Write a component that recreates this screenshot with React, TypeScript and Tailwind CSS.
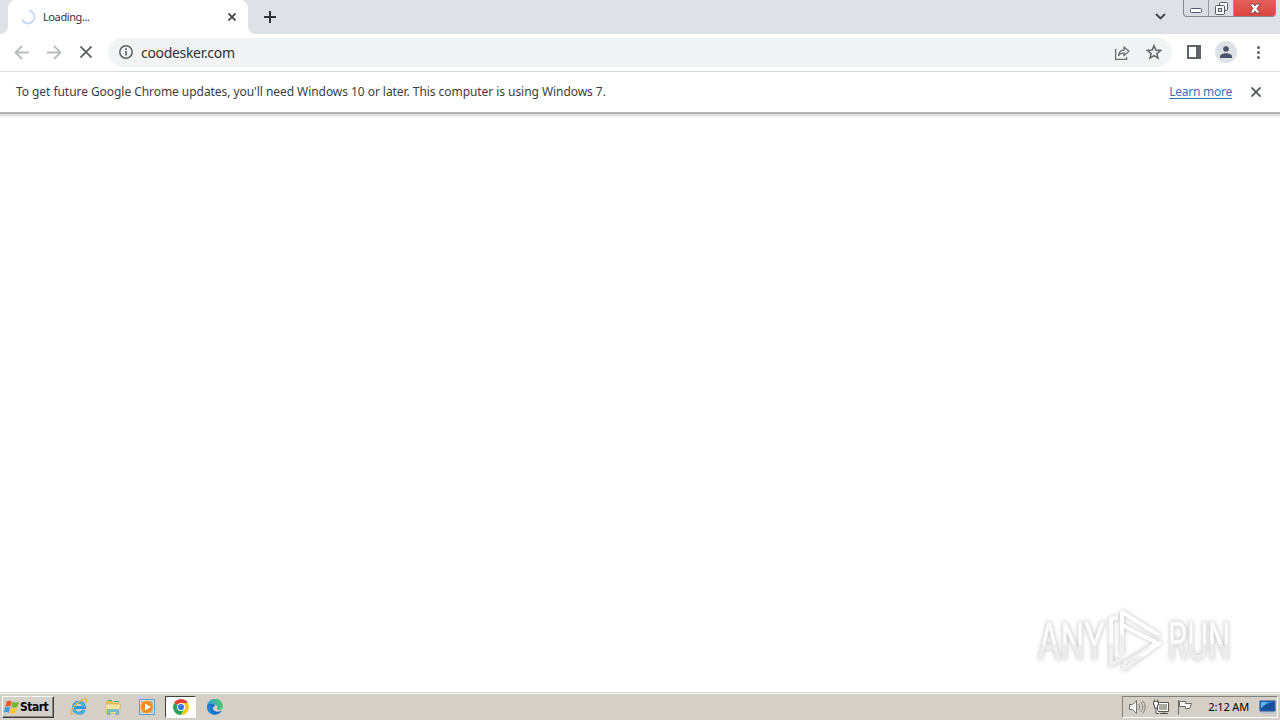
import type { ReactNode } from "react";

function BrowserTab() {
  return (
    <div className="relative flex h-[34px] w-60 items-center rounded-t-lg bg-white pl-3">
      <svg className="h-4 w-4 shrink-0" viewBox="0 0 16 16" fill="none" stroke="#c9dafb" strokeWidth="2">
        <path d="M9 1.500A6.500 6.500 0 1 1 2 10.500" />
      </svg>
      <span className="ml-[7px] text-[11px] tracking-[-0.4px] text-[#34363a]">Loading...</span>
      <svg className="ml-auto mr-3 h-2 w-2" viewBox="0 0 8 8" stroke="#3c4043" strokeWidth="1.7">
        <path d="M.5.5l7 7M7.500.5l-7 7" />
      </svg>
      <svg className="absolute -left-2 bottom-0 h-2 w-2" viewBox="0 0 8 8" fill="#fff">
        <path d="M8 0v8H0a8 8 0 0 0 8-8" />
      </svg>
      <svg className="absolute -right-2 bottom-0 h-2 w-2" viewBox="0 0 8 8" fill="#fff">
        <path d="M0 0v8h8a8 8 0 0 1-8-8" />
      </svg>
    </div>
  );
}

function WindowButtons() {
  return (
    <div className="mr-1 flex h-[17px] w-[93px] overflow-hidden rounded-b-[4px] border border-t-0 border-[#85888e] bg-[#dadde3]">
      <div className="flex w-[25px] items-center justify-center border-r border-[#96999f]">
        <svg className="mt-1 h-[5px] w-3" viewBox="0 0 12 5">
          <rect x=".5" y=".5" width="11" height="4" rx="1" fill="#fff" stroke="#555b66" />
        </svg>
      </div>
      <div className="flex w-[25px] items-center justify-center border-r border-[#96999f]">
        <svg className="h-[13px] w-[13px]" viewBox="0 0 13 13" fill="#f8f9fb" stroke="#555b66">
          <rect x="4.5" y=".5" width="8" height="8" rx="1" />
          <rect x=".5" y="3.5" width="9" height="9" rx="1" />
          <rect x="3.5" y="6.5" width="3" height="3" fill="#dadde3" />
        </svg>
      </div>
      <div className="flex flex-1 items-center justify-center bg-linear-to-b from-[#e2605a] to-[#dc4640]">
        <svg className="h-[11px] w-3" viewBox="0 0 12 11">
          <path d="M.8 1h3.700L6 3l1.500-2h3.700L8 5.500l3.200 4.500H7.500L6 8l-1.500 2H.8L4 5.500z" fill="#fff" stroke="#71383b" strokeWidth=".8" />
        </svg>
      </div>
    </div>
  );
}

function TabStrip() {
  return (
    <div className="flex h-[34px] shrink-0 items-start bg-[#dee1e6] pl-2">
      <BrowserTab />
      <svg className="ml-4 mt-[11px] h-3 w-3" viewBox="0 0 12 12" stroke="#303237" strokeWidth="2">
        <path d="M6 0v12M0 6h12" />
      </svg>
      <svg className="ml-auto mr-[17px] mt-[13px] h-[7px] w-[11px]" viewBox="0 0 11 7" fill="none" stroke="#404348" strokeWidth="1.8">
        <path d="M1 1l4.500 4.500L10 1" />
      </svg>
      <WindowButtons />
    </div>
  );
}

function Toolbar() {
  return (
    <div className="flex h-[38px] shrink-0 items-center border-b border-[#dadce0] bg-white pl-3.5">
      <svg className="h-4 w-4" viewBox="0 0 16 16" fill="none" stroke="#b9bbbe" strokeWidth="1.8">
        <path d="M15 7.500H2M8 1L1.500 7.500 8 14" />
      </svg>
      <svg className="ml-4 h-4 w-4" viewBox="0 0 16 16" fill="none" stroke="#b9bbbe" strokeWidth="1.8">
        <path d="M1 7.500h13M8 1l6.500 6.500L8 14" />
      </svg>
      <svg className="mb-px ml-[18px] h-3 w-3" viewBox="0 0 12 12" stroke="#5b5e63" strokeWidth="1.8">
        <path d="M.5.5l11 11M11.500.5l-11 11" />
      </svg>
      <div className="ml-4 flex h-[29px] w-[1064px] items-center rounded-full bg-[#f1f3f4] pl-[11px] pr-2.5">
        <svg className="mb-px h-3.5 w-3.5" viewBox="0 0 14 14" fill="none" stroke="#5f6368" strokeWidth="1.5">
          <circle cx="7" cy="7" r="6.200" />
          <path d="M7 6v4.500M7 3.300v1.600" strokeWidth="1.700" />
        </svg>
        <span className="ml-2 text-[14px] tracking-[-0.32px] text-[#303236]">coodesker.com</span>
        <svg className="ml-auto h-4 w-4" viewBox="0 0 16 16" fill="none" stroke="#6b6e73" strokeWidth="1.3">
          <path d="M1.600 4v10.400h11V12" />
          <path d="M4.500 10.500C5 7 7 5 10 4.800V2l5 4.300-5 4.200V7.800c-2.500 0-4 .8-5.500 2.700z" strokeLinejoin="round" />
        </svg>
        <svg className="mb-px ml-4 h-4 w-4" viewBox="0 0 16 16" fill="none" stroke="#5f6368" strokeWidth="1.5">
          <path d="M8 1.700l1.800 4.400 4.700.4-3.600 3.100 1.100 4.600L8 11.700l-4 2.500 1.100-4.600-3.600-3.100 4.700-.4z" />
        </svg>
      </div>
      <svg className="mb-0.5 ml-[15px] h-3.5 w-3.5" viewBox="0 0 14 14">
        <path d="M1 1h12v12H1z" fill="none" stroke="#5f6368" strokeWidth="2" />
        <path d="M9 1h4v12H9z" fill="#5f6368" />
      </svg>
      <div className="mb-0.5 ml-3.5 flex h-[22px] w-[22px] items-center justify-center rounded-full bg-[#dee1e6]">
        <svg className="h-3 w-3" viewBox="0 0 12 12" fill="#4a5367">
          <circle cx="6" cy="3" r="2.800" />
          <path d="M0 12v-1.500C0 8.300 3.500 7.200 6 7.200s6 1.100 6 3.300V12z" />
        </svg>
      </div>
      <svg className="ml-5 h-[13px] w-[3px]" viewBox="0 0 3 13" fill="#5f6368">
        <circle cx="1.500" cy="1.500" r="1.500" />
        <circle cx="1.500" cy="6.500" r="1.500" />
        <circle cx="1.500" cy="11.500" r="1.500" />
      </svg>
    </div>
  );
}

function InfoBar() {
  return (
    <>
      <div className="flex h-10 shrink-0 items-center bg-white pl-4 pr-[19px] text-[12px]">
        <span className="whitespace-nowrap tracking-[-0.055px] text-[#3c3d40]">
          To get future Google Chrome updates, you'll need Windows 10 or later. This computer is using Windows 7.
        </span>
        <a href="#" className="ml-auto tracking-[-0.25px] text-[#2f73bd] underline underline-offset-2">Learn more</a>
        <svg className="ml-[19px] h-2.5 w-2.5" viewBox="0 0 10 10" stroke="#55585c" strokeWidth="1.900">
          <path d="M.5.5l9 9M9.500.5l-9 9" />
        </svg>
      </div>
      <div className="h-0.5 shrink-0 bg-[#b1b1b1]" />
      <div className="h-0.5 shrink-0 bg-[#e0e0e0]" />
      <div className="h-0.5 shrink-0 bg-[#f7f7f7]" />
    </>
  );
}

function Watermark() {
  return (
    <svg className="h-[74px] w-[206px]" viewBox="0 0 206 74" style={{ filter: "drop-shadow(0 0 2px #bdbdbd)" }}>
      <defs>
        <linearGradient id="letters" x1="0" y1="0" x2="0" y2="1">
          <stop offset=".54" stopColor="#fff" />
          <stop offset=".55" stopColor="#ebebeb" />
        </linearGradient>
        <linearGradient id="mark" x1="0" y1="0" x2="0" y2="1">
          <stop offset=".5" stopColor="#fff" />
          <stop offset=".58" stopColor="#f0f0f0" />
        </linearGradient>
      </defs>
      <g fill="url(#letters)" stroke="#f1f1f1" strokeWidth="1" fontFamily="Roboto, sans-serif" fontSize="51">
        <text transform="translate(4 54) scale(.67 1)">ANY</text>
        <text transform="translate(134 54) scale(.62 1)">RUN</text>
      </g>
      <g fill="none" stroke="url(#mark)" strokeWidth="4" strokeLinejoin="round">
        <path d="M88 49V7l38 24" />
        <path d="M88 20l35 18-34 21" />
        <path d="M84 12l-7 2v46l10-6" />
        <path d="M127 37L90 64v-5" />
      </g>
    </svg>
  );
}

function StartFlag() {
  return (
    <svg className="h-[17px] w-[17px] shrink-0" viewBox="0 0 16 16">
      <path d="M3.500 2.300c2-1.200 3.300-.8 4.800 0L7 7.200c-1.500-.9-3-.9-4.900 0z" fill="#ea5a29" />
      <path d="M9 2.700c1.700.8 3.200 1 6 0l-1.500 4.800c-2.200 1-4 .8-5.700 0z" fill="#77b536" />
      <path d="M1.900 8c2-1.100 3.400-.8 4.900 0l-1.300 4.900c-1.600-.9-3.100-.9-5 0z" fill="#439edc" />
      <path d="M7.500 8.300c1.700.8 3.300 1 5.800 0l-1.400 4.800c-2.200 1-4 .8-5.700 0z" fill="#f9c62d" />
    </svg>
  );
}

function IeIcon() {
  return (
    <svg className="h-[18px] w-[18px]" viewBox="0 0 18 18" fill="none">
      <path d="M14 12A5.500 5.500 0 1 1 14.500 9.500H5" stroke="#2b9bdb" strokeWidth="3" />
      <path d="M14 12A5.500 5.500 0 1 1 14.500 9.500" stroke="#7fcdf0" strokeWidth=".8" />
      <path d="M3 15.500C-1.500 18 1 10.500 7 5.500S18-1 16 5" stroke="#e3b741" strokeWidth="1.300" />
    </svg>
  );
}

function ExplorerIcon() {
  return (
    <svg className="h-[18px] w-[18px]" viewBox="0 0 18 18">
      <path d="M2 3.500l1-1h5l1 2h6v11H2z" fill="#e4bd57" />
      <path d="M4 2.500h4M10 3.500h5" stroke="#53aa70" />
      <path d="M1.500 6h15l-1 9.500h-13z" fill="#f8e49b" stroke="#d9b453" strokeWidth=".7" />
      <path d="M3.500 16.500v-5h11v5h-2.500v-3H6v3z" fill="#79bfdf" stroke="#4d9dc4" strokeWidth=".6" />
    </svg>
  );
}

function MediaIcon() {
  return (
    <svg className="h-[18px] w-[18px]" viewBox="0 0 18 18">
      <path d="M1.500 1.500h15v15h-15z" fill="#d6eaf8" stroke="#5c9bce" />
      <path d="M3 3h12v12H3z" fill="#8fbbe0" />
      <circle cx="9" cy="9" r="6.200" fill="#ef8b1f" stroke="#f8b455" />
      <path d="M7 5.500l6 3.500-6 3.500z" fill="#fff" />
    </svg>
  );
}

function ChromeIcon() {
  return (
    <svg className="h-4 w-4" viewBox="0 0 16 16">
      <path d="M8 8L1.100 4a8 8 0 0 1 13.800 0z" fill="#e34133" />
      <path d="M8 8L1.100 4A8 8 0 0 0 8 16l3.500-6z" fill="#25a552" />
      <path d="M8 8l3.500 2L8 16a8 8 0 0 0 6.900-12H8z" fill="#fbc917" />
      <circle cx="8" cy="8" r="4" fill="#fff" />
      <circle cx="8" cy="8" r="3.100" fill="#347de8" />
    </svg>
  );
}

function EdgeIcon() {
  return (
    <svg className="h-4 w-4" viewBox="0 0 16 16">
      <defs>
        <linearGradient id="edge" x1="0" y1=".3" x2="1" y2=".2">
          <stop stopColor="#279de3" />
          <stop offset="1" stopColor="#55cc63" />
        </linearGradient>
      </defs>
      <path d="M0 8a8 8 0 0 1 16-.5c0 3-3 4-5.500 3.100-.9-.3-.7-.8-.3-1.400C11 7.500 9.500 5.500 6.500 5.500 3 5.500 0 8 0 8z" fill="url(#edge)" />
      <path d="M0 8c.4-3.500 6.500-4.500 8.500-1C5.500 7 5 10 7.500 11.800c2.300 1.500 5 .9 7.400-.2A8 8 0 0 1 0 8z" fill="#176fc3" />
      <path d="M5 7c-2.200 3.500.2 8 4 8.900A8 8 0 0 1 0 8c1-1.800 3-2 5-1z" fill="#1e83d2" />
    </svg>
  );
}

function TaskItem({ children, active = false }: { children: ReactNode; active?: boolean }) {
  return (
    <div
      className={`flex h-[22px] w-[31px] items-center justify-center ${
        active ? "border border-[#404040] border-b-white border-r-white bg-white" : ""
      }`}
    >
      {children}
    </div>
  );
}

function SystemTray() {
  return (
    <div className="ml-auto mr-0.5 flex h-[22px] w-[156px] items-center border border-[#85827b] border-b-white border-r-white pl-[5px] pr-px">
      <svg className="h-4 w-[18px]" viewBox="0 0 18 16" fill="#fff" stroke="#77756f">
        <path d="M1.500 5.500h3l4-4v13l-4-4h-3z" />
        <path d="M10.500 5c1.500 2 1.500 4 0 6M12.500 3c3 3 3 7 0 10M14.500 1.500c3.500 4 3.500 9 0 13" fill="none" strokeWidth=".9" />
      </svg>
      <svg className="ml-[7px] h-4 w-4" viewBox="0 0 16 16" fill="#fff" stroke="#57554f">
        <path d="M4.500 3.500h11v9h-11zM7 14.500h8M11 13v2" />
        <path d="M6 5h8v6H6z" fill="#aaa89f" stroke="none" />
        <path d="M.5 2.500h5v3.500h-1v3h-3V6h-1zM1.500.5v2M4.500.5v2M3 9v5.500h3" />
      </svg>
      <svg className="ml-2 h-4 w-4" viewBox="0 0 16 16" fill="#fff" stroke="#6b6963">
        <path d="M1.500 1v14.500M2.500 2.500h6v2h6l-2 5h-4v-2h-6z" />
      </svg>
      <span className="ml-auto whitespace-nowrap text-[11px] tracking-[-0.15px] text-black">2:12 AM</span>
      <svg className="ml-2.5 h-4 w-[17px]" viewBox="0 0 17 16">
        <path d="M1 2h15v10H1z" fill="#267bd1" stroke="#164886" />
        <path d="M2 10c5-6 9-5 13-7v8H2z" fill="#174f9b" />
        <path d="M2 3h7L2 9z" fill="#5bb4e8" />
        <path d="M2 14h13" stroke="#b9c7d2" strokeWidth="2" />
      </svg>
    </div>
  );
}

function Taskbar() {
  return (
    <div className="flex h-[26px] shrink-0 items-start bg-[#d4d0c8] pt-0.5">
      <div className="ml-0.5 flex h-[22px] w-[52px] items-center border border-[#404040] border-l-white border-t-white shadow-[inset_-1px_-1px_0_#87847d]">
        <StartFlag />
        <span className="text-[12px] font-bold leading-none tracking-[-0.5px] text-black [font-family:'DejaVu_Sans_Condensed','DejaVu_Sans',sans-serif]">Start</span>
      </div>
      <div className="ml-[9px] flex gap-[3px]">
        <TaskItem><IeIcon /></TaskItem>
        <TaskItem><ExplorerIcon /></TaskItem>
        <TaskItem><MediaIcon /></TaskItem>
        <TaskItem active><ChromeIcon /></TaskItem>
        <TaskItem><EdgeIcon /></TaskItem>
      </div>
      <SystemTray />
    </div>
  );
}

export default function App() {
  return (
    <div className="flex h-[720px] w-[1280px] flex-col overflow-hidden bg-white [font-family:'Noto_Sans',sans-serif]">
      <TabStrip />
      <Toolbar />
      <InfoBar />
      <main className="flex flex-1 items-end justify-end border-b border-[#d4d0c8] bg-white pb-[13px] pr-10">
        <Watermark />
      </main>
      <div className="h-px shrink-0 bg-white" />
      <Taskbar />
    </div>
  );
}
